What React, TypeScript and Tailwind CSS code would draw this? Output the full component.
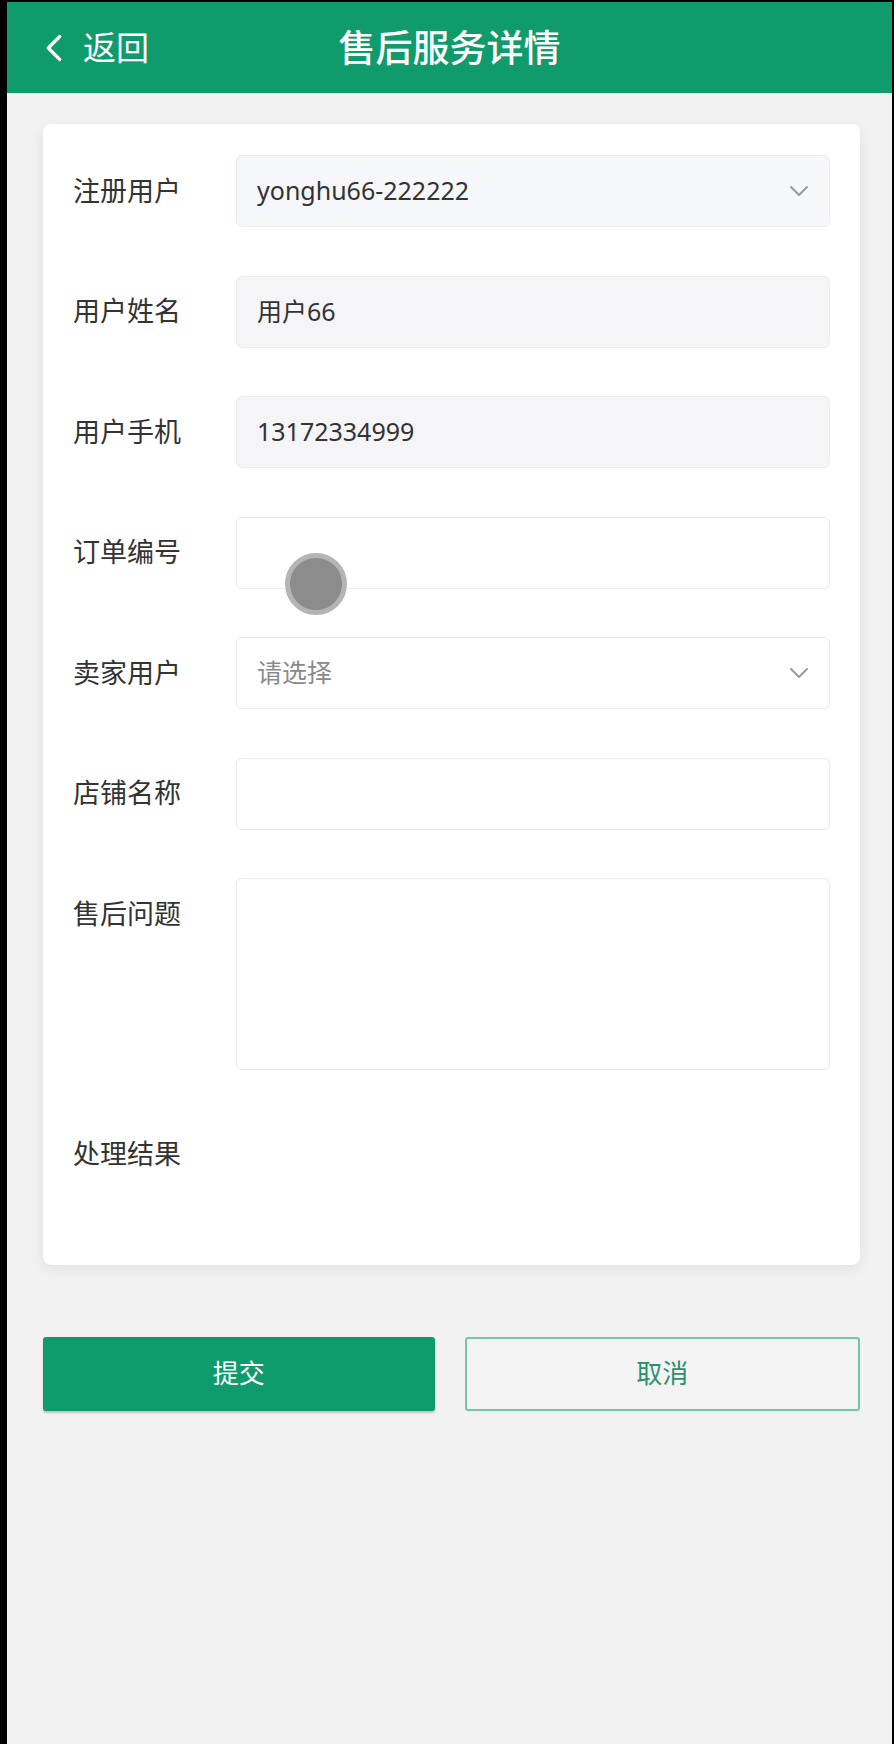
import { ChevronLeft, ChevronDown } from 'lucide-react'

const font = { fontFamily: '"Noto Sans", "Noto Sans CJK SC", sans-serif' }

type Field = {
  label: string
  value?: string
  placeholder?: string
  kind: 'select' | 'readonly' | 'input' | 'textarea'
  tint?: string
}

const fields: Field[] = [
  { label: '注册用户', value: 'yonghu66-222222', kind: 'select', tint: 'bg-[#f6f7fb]' },
  { label: '用户姓名', value: '用户66', kind: 'readonly' },
  { label: '用户手机', value: '13172334999', kind: 'readonly' },
  { label: '订单编号', kind: 'input' },
  { label: '卖家用户', placeholder: '请选择', kind: 'select' },
  { label: '店铺名称', kind: 'input' },
  { label: '售后问题', kind: 'textarea' },
]

function FieldBox({ f }: { f: Field }) {
  if (f.kind === 'textarea') {
    return <div className="h-[192px] flex-1 rounded-[6px] border border-[#ececec] bg-white" />
  }
  const bg = f.tint ?? (f.kind === 'readonly' ? 'bg-[#f5f5f7]' : 'bg-white')
  return (
    <div className={`flex h-[72px] flex-1 items-center justify-between rounded-[6px] border border-[#ececec] pl-[20px] pr-[14px] ${bg}`}>
      <span className={`text-[25px] ${f.value ? 'text-[#333]' : 'text-[#8a8a8a]'}`}>
        {f.value ?? f.placeholder ?? ''}
      </span>
      {f.kind === 'select' && <ChevronDown className="h-[32px] w-[32px] text-[#9a9a9a]" strokeWidth={1.5} />}
    </div>
  )
}

export default function App() {
  return (
    <div className="relative flex min-h-[1744px] bg-black pl-[7px] pr-[2px] pt-[2px]" style={font}>
      <div className="flex flex-1 flex-col bg-[#f2f2f2]">
        <header className="relative flex h-[91px] items-center justify-center bg-[#0f9b6c] text-white">
          <div className="absolute left-[24px] flex items-center gap-[6px]">
            <ChevronLeft className="h-[46px] w-[46px]" strokeWidth={1.7} />
            <span className="text-[33px]">返回</span>
          </div>
          <h1 className="text-[37px] font-medium">售后服务详情</h1>
        </header>

        <div className="ml-[36px] mr-[32px] mt-[31px] rounded-[8px] bg-white px-[30px] pb-[74px] pt-[31px] shadow-[0_4px_14px_rgba(0,0,0,0.08)]">
          <div className="flex flex-col gap-[48.5px]">
            {fields.map((f) => (
              <div key={f.label} className="flex items-start">
                <div className="flex h-[72px] w-[163px] shrink-0 items-center text-[27px] text-[#333]">{f.label}</div>
                <FieldBox f={f} />
              </div>
            ))}
            <div className="flex items-start">
              <div className="flex h-[72px] w-[163px] shrink-0 items-center text-[27px] text-[#333]">处理结果</div>
            </div>
          </div>
        </div>

        <div className="ml-[36px] mr-[32px] mt-[72px] flex gap-[30px]">
          <button className="h-[74px] flex-1 rounded-[3px] bg-[#0f9b6c] text-[26px] text-white shadow-[0_2px_2px_rgba(0,0,0,0.2)]">
            提交
          </button>
          <button className="h-[74px] flex-1 rounded-[3px] border-2 border-[#74c4a6] bg-[#f3f3f3] text-[26px] text-[#2f8f6d]">
            取消
          </button>
        </div>
      </div>

      <div className="absolute left-[285px] top-[553px] h-[62px] w-[62px] rounded-full border-[5px] border-[#b4b4b4] bg-[#8c8c8c]" />
    </div>
  )
}
